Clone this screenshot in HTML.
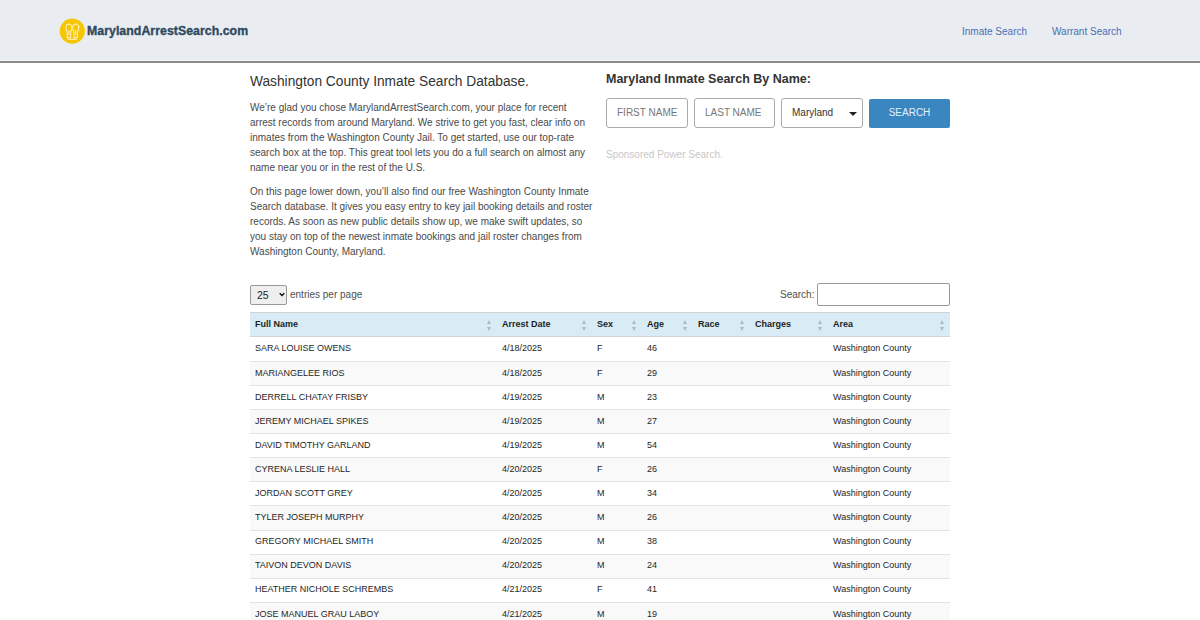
<!DOCTYPE html>
<html><head><meta charset="utf-8">
<style>
*{box-sizing:border-box}
html,body{margin:0;padding:0;background:#fff;width:1200px;height:620px;overflow:hidden;font-family:"Liberation Sans",sans-serif;color:#333}
#hdr{position:absolute;left:0;top:0;width:1200px;height:63px;background:#e9edf1;border-bottom:2px solid #8a8a8a;box-shadow:inset 0 -1px 0 #f2f4f7}
#logo{position:absolute;left:59px;top:18px}
#logotxt{position:absolute;left:87px;top:23.5px;font-size:12.3px;font-weight:bold;color:#304960;white-space:nowrap;-webkit-text-stroke:0.35px #304960;letter-spacing:0.05px}
.nav{position:absolute;top:25.5px;font-size:10px;color:#4a6db3;white-space:nowrap}
#h1{position:absolute;left:250px;top:73.5px;font-size:13.74px;color:#333;white-space:nowrap}
.p{position:absolute;left:250px;width:344px;font-size:10px;line-height:15px;color:#4a4a4a}
#h2{position:absolute;left:606px;top:71.5px;font-size:12.5px;font-weight:bold;color:#333;white-space:nowrap}
.inp{position:absolute;top:98px;height:30px;border:1px solid #aaa;border-radius:3px;background:#fff;font-size:10px;color:#777;padding-left:10px;line-height:28px}
#btn{position:absolute;left:869px;top:99px;width:81px;height:28.5px;background:#3a86c1;border-radius:2px;color:#e3f1fc;font-size:10px;text-align:center;line-height:27px}
#spons{position:absolute;left:606px;top:149px;font-size:10px;color:#c8c8c8;white-space:nowrap}
#sel25{position:absolute;left:250px;top:285px;width:37px;height:20px;border:1px solid #999;border-radius:2px;background:#efefef;font-size:10.5px;color:#222;padding-left:6px;line-height:18px}
#epp{position:absolute;left:290px;top:288.7px;font-size:10px;color:#505050;white-space:nowrap}
#srch{position:absolute;left:780px;top:288.7px;font-size:10px;color:#505050;white-space:nowrap}
#srchbox{position:absolute;left:817px;top:283px;width:133px;height:23px;border:1px solid #999;border-radius:2px;background:#fff}
#tbl{position:absolute;left:250px;top:312px;width:700px;border-collapse:collapse;font-size:9px}
#tbl th{background:#d9ecf6;height:24px;text-align:left;font-weight:bold;color:#1b1f24;padding:0 0 2px 5px;border-top:1px solid #d2d2d2;border-bottom:1px solid #d2d2d2;position:relative;white-space:nowrap}
#tbl td{height:24.07px;padding:0 0 1.5px 5px;border-bottom:1px solid #e3e3e3;color:#262626;white-space:nowrap}
#tbl tr:nth-child(even) td{background:#f9f9f9}
#tbl tbody tr:first-child td{height:25.1px}

.si{position:absolute;right:6px;top:6.5px;width:4px;height:11px}
.si:before{content:"";position:absolute;left:0;top:0;border-left:2px solid transparent;border-right:2px solid transparent;border-bottom:4px solid #a9bac6}
.si:after{content:"";position:absolute;left:0;top:7px;border-left:2px solid transparent;border-right:2px solid transparent;border-top:4px solid #a9bac6}
#caret{position:absolute;left:848.5px;top:112px;border-left:4px solid transparent;border-right:4px solid transparent;border-top:4.5px solid #222}
#chev{position:absolute;left:278.5px;top:292.3px;width:6px;height:5px}
</style></head><body>
<div id="hdr">
  <svg id="logo" width="27" height="28" viewBox="0 0 27 28"><circle cx="13.3" cy="13.1" r="12.6" fill="#f6c604"/>
<g fill="none" stroke="#fff3c4" stroke-width="1.1" opacity="0.9">
<path d="M7 9.5 C7 5 12.8 5 12.8 9.5 C12.8 12.5 11.8 13.5 11.6 15 L11.6 19.6 L8.2 19.6 L8.2 15 C8 13.5 7 12.5 7 9.5 Z"/>
<path d="M13.8 9.5 C13.8 5 19.6 5 19.6 9.5 C19.6 12.5 18.6 13.5 18.4 15 L18.4 19.6 L15 19.6 L15 15 C14.8 13.5 13.8 12.5 13.8 9.5 Z"/>
<path d="M19.3 8.8 L21 8.8 M9.9 12 L9.9 17 M16.7 12 L16.7 17"/>
<path d="M8.5 21.3 L18 21.3" stroke-width="1.2"/>
</g></svg>
  <div id="logotxt">MarylandArrestSearch.com</div>
  <div class="nav" style="left:962px">Inmate Search</div>
  <div class="nav" style="left:1052px">Warrant Search</div>
</div>
<div id="h1">Washington County Inmate Search Database.</div>
<div class="p" style="top:100px">We’re glad you chose MarylandArrestSearch.com, your place for recent arrest records from around Maryland. We strive to get you fast, clear info on inmates from the Washington County Jail. To get started, use our top-rate search box at the top. This great tool lets you do a full search on almost any name near you or in the rest of the U.S.</div>
<div class="p" style="top:184px">On this page lower down, you’ll also find our free Washington County Inmate Search database. It gives you easy entry to key jail booking details and roster records. As soon as new public details show up, we make swift updates, so you stay on top of the newest inmate bookings and jail roster changes from Washington County, Maryland.</div>
<div id="h2">Maryland Inmate Search By Name:</div>
<div class="inp" style="left:606px;width:82px">FIRST NAME</div>
<div class="inp" style="left:694px;width:81px">LAST NAME</div>
<div class="inp" style="left:781px;width:82px;color:#333;line-height:28.3px">Maryland</div>
<div id="caret"></div>
<div id="btn">SEARCH</div>
<div id="spons">Sponsored Power Search.</div>
<div id="sel25">25</div>
<svg id="chev" viewBox="0 0 6 5"><path d="M0.7 1.2 L3 3.6 L5.3 1.2" fill="none" stroke="#111" stroke-width="1.4"/></svg>
<div id="epp">entries per page</div>
<div id="srch">Search:</div>
<div id="srchbox"></div>
<table id="tbl">
<thead><tr><th style="width:247px">Full Name<i class="si"></i></th><th style="width:95px">Arrest Date<i class="si"></i></th><th style="width:50px">Sex<i class="si"></i></th><th style="width:51px">Age<i class="si"></i></th><th style="width:57px">Race<i class="si"></i></th><th style="width:78px">Charges<i class="si"></i></th><th>Area<i class="si"></i></th></tr></thead>
<tbody>
<tr><td>SARA LOUISE OWENS</td><td>4/18/2025</td><td>F</td><td>46</td><td></td><td></td><td>Washington County</td></tr>
<tr><td>MARIANGELEE RIOS</td><td>4/18/2025</td><td>F</td><td>29</td><td></td><td></td><td>Washington County</td></tr>
<tr><td>DERRELL CHATAY FRISBY</td><td>4/19/2025</td><td>M</td><td>23</td><td></td><td></td><td>Washington County</td></tr>
<tr><td>JEREMY MICHAEL SPIKES</td><td>4/19/2025</td><td>M</td><td>27</td><td></td><td></td><td>Washington County</td></tr>
<tr><td>DAVID TIMOTHY GARLAND</td><td>4/19/2025</td><td>M</td><td>54</td><td></td><td></td><td>Washington County</td></tr>
<tr><td>CYRENA LESLIE HALL</td><td>4/20/2025</td><td>F</td><td>26</td><td></td><td></td><td>Washington County</td></tr>
<tr><td>JORDAN SCOTT GREY</td><td>4/20/2025</td><td>M</td><td>34</td><td></td><td></td><td>Washington County</td></tr>
<tr><td>TYLER JOSEPH MURPHY</td><td>4/20/2025</td><td>M</td><td>26</td><td></td><td></td><td>Washington County</td></tr>
<tr><td>GREGORY MICHAEL SMITH</td><td>4/20/2025</td><td>M</td><td>38</td><td></td><td></td><td>Washington County</td></tr>
<tr><td>TAIVON DEVON DAVIS</td><td>4/20/2025</td><td>M</td><td>24</td><td></td><td></td><td>Washington County</td></tr>
<tr><td>HEATHER NICHOLE SCHREMBS</td><td>4/21/2025</td><td>F</td><td>41</td><td></td><td></td><td>Washington County</td></tr>
<tr><td>JOSE MANUEL GRAU LABOY</td><td>4/21/2025</td><td>M</td><td>19</td><td></td><td></td><td>Washington County</td></tr>
</tbody></table>
</body></html>
